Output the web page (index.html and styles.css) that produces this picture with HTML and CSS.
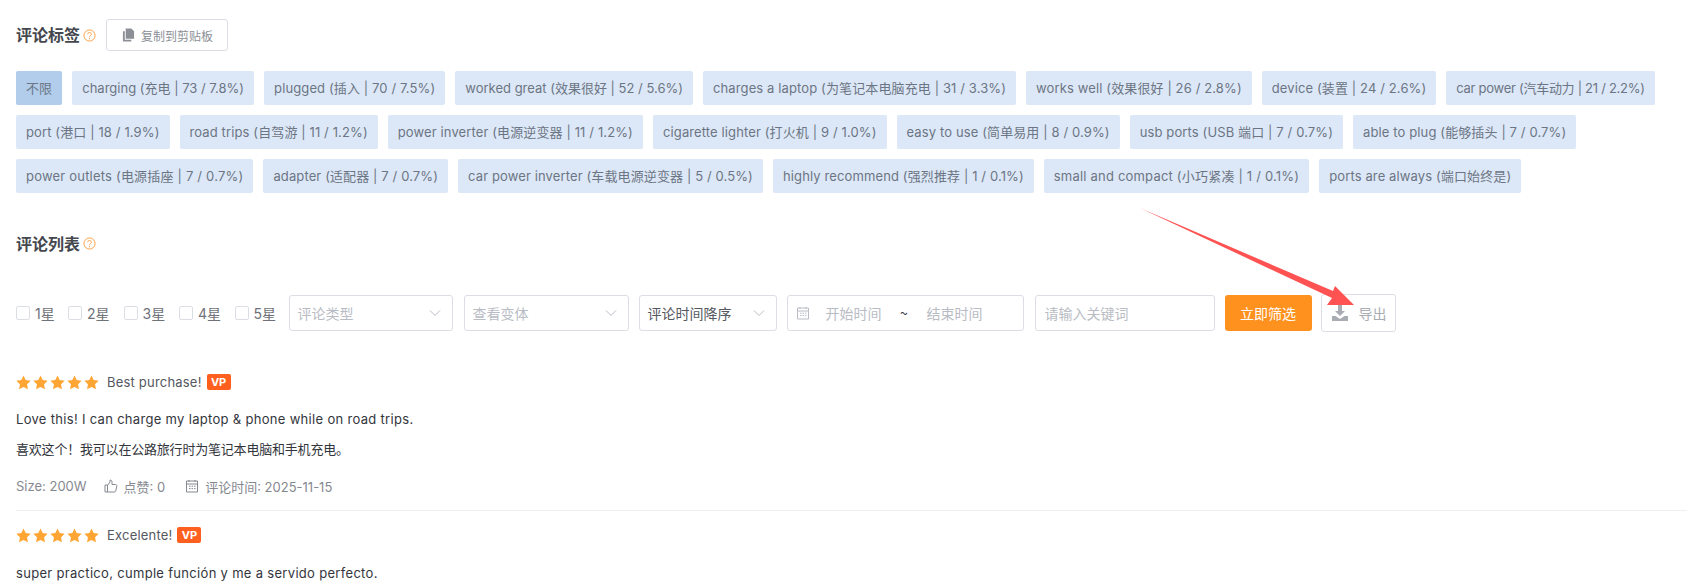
FILE: index.html
```html
<!DOCTYPE html>
<html lang="zh">
<head>
<meta charset="utf-8">
<title>评论</title>
<link rel="stylesheet" href="styles.css">
</head>
<body>
<svg class="defs" width="0" height="0">
  <symbol id="star" viewBox="0 0 24 24"><path d="M12 .8l3.500 7.300 8 1.100-5.800 5.600 1.400 8L12 19l-7.100 3.800 1.400-8L.5 9.200l8-1.100z"/></symbol>
  <symbol id="help" viewBox="0 0 14 14"><circle cx="7" cy="7" r="6" fill="none" stroke="currentColor"/><path d="M5.100 5.600a1.900 1.900 0 1 1 2.900 1.600c-.7.400-1 .8-1 1.500" fill="none" stroke="currentColor"/><circle cx="7" cy="10.400" r=".7" fill="currentColor"/></symbol>
  <symbol id="cal" viewBox="0 0 14 14"><path d="M1.500 2h11v11h-11zM1.500 5h11M4 1v2M10 1v2M4 7.200h1.500M6.500 7.200H8M9 7.200h1.500M4 9.600h1.500M6.500 9.600H8M9 9.600h1.500" fill="none" stroke="currentColor"/></symbol>
  <symbol id="chev" viewBox="0 0 12 8"><path d="M1 1.500l5 5 5-5" fill="none" stroke="currentColor"/></symbol>
</svg>
<main class="page">
  <div class="head head-tags">
    <h2 class="title">评论标签</h2>
    <svg class="help"><use href="#help"/></svg>
    <button class="copy">
      <svg class="copy-icon" viewBox="0 0 14 14"><path d="M4 0h6l3 3v8H4z" fill="#8c8f96"/><path d="M1 3h2v9h7v2H1z" fill="#8c8f96"/></svg>
      复制到剪贴板
    </button>
  </div>
  <div class="tags">
    <span class="tag tag-on">不限</span>
    <span class="tag tag-snug">charging (充电 | 73 / 7.8%)</span>
    <span class="tag">plugged (插入 | 70 / 7.5%)</span>
    <span class="tag tag-snug">worked great (效果很好 | 52 / 5.6%)</span>
    <span class="tag">charges a laptop (为笔记本电脑充电 | 31 / 3.3%)</span>
    <span class="tag">works well (效果很好 | 26 / 2.8%)</span>
    <span class="tag">device (装置 | 24 / 2.6%)</span>
    <span class="tag tag-tight">car power (汽车动力 | 21 / 2.2%)</span>
    <span class="tag">port (港口 | 18 / 1.9%)</span>
    <span class="tag">road trips (自驾游 | 11 / 1.2%)</span>
    <span class="tag">power inverter (电源逆变器 | 11 / 1.2%)</span>
    <span class="tag">cigarette lighter (打火机 | 9 / 1.0%)</span>
    <span class="tag">easy to use (简单易用 | 8 / 0.9%)</span>
    <span class="tag">usb ports (USB 端口 | 7 / 0.7%)</span>
    <span class="tag">able to plug (能够插头 | 7 / 0.7%)</span>
    <span class="tag tag-wide">power outlets (电源插座 | 7 / 0.7%)</span>
    <span class="tag">adapter (适配器 | 7 / 0.7%)</span>
    <span class="tag">car power inverter (车载电源逆变器 | 5 / 0.5%)</span>
    <span class="tag">highly recommend (强烈推荐 | 1 / 0.1%)</span>
    <span class="tag tag-wide">small and compact (小巧紧凑 | 1 / 0.1%)</span>
    <span class="tag">ports are always (端口始终是)</span>
  </div>
  <div class="head head-list">
    <h2 class="title">评论列表</h2>
    <svg class="help"><use href="#help"/></svg>
  </div>
  <div class="filters">
    <label class="check check-first"><i class="box"></i>1星</label>
    <label class="check"><i class="box"></i>2星</label>
    <label class="check"><i class="box"></i>3星</label>
    <label class="check"><i class="box"></i>4星</label>
    <label class="check check-last"><i class="box"></i>5星</label>
    <div class="field select w-type"><span class="ph">评论类型</span><svg class="chev"><use href="#chev"/></svg></div>
    <div class="field select w-var"><span class="ph">查看变体</span><svg class="chev"><use href="#chev"/></svg></div>
    <div class="field select w-sort"><span>评论时间降序</span><svg class="chev"><use href="#chev"/></svg></div>
    <div class="field w-date">
      <svg class="date-icon"><use href="#cal"/></svg>
      <span class="ph">开始时间</span><span class="tilde">~</span><span class="ph">结束时间</span>
    </div>
    <div class="field w-key"><span class="ph">请输入关键词</span></div>
    <button class="go">立即筛选</button>
    <button class="export">
      <svg class="export-icon" viewBox="0 0 16 16"><path d="M6 0h4v6h3l-5 5-5-5h3z" fill="#a9acb3"/><path d="M0 11h3.500L8 14l4.500-3H16v5H0z" fill="#a9acb3"/></svg>
      导出
    </button>
  </div>
  <article class="review">
    <div class="r-head">
      <span class="stars"><svg><use href="#star"/></svg><svg><use href="#star"/></svg><svg><use href="#star"/></svg><svg><use href="#star"/></svg><svg><use href="#star"/></svg></span>
      <span class="r-title">Best purchase!</span><span class="vp">VP</span>
    </div>
    <p class="r-text">Love this! I can charge my laptop &amp; phone while on road trips.</p>
    <p class="r-text r-cn">喜欢这个！我可以在公路旅行时为笔记本电脑和手机充电。</p>
    <div class="meta">
      <span>Size: 200W</span>
      <span class="meta-item"><svg class="meta-icon" viewBox="0 0 14 14"><path d="M1 6h2.500v7H1zM3.500 6.500L6 3V1c1.500 0 2 1 2 2v2.500h3.500c1 0 1.500.8 1.300 1.700l-1 4.500c-.2.800-.7 1.300-1.500 1.300H3.500" fill="none" stroke="currentColor"/></svg>点赞: 0</span>
      <span class="meta-item"><svg class="meta-icon"><use href="#cal"/></svg>评论时间: 2025-11-15</span>
    </div>
  </article>
  <article class="review review-next">
    <div class="r-head">
      <span class="stars"><svg><use href="#star"/></svg><svg><use href="#star"/></svg><svg><use href="#star"/></svg><svg><use href="#star"/></svg><svg><use href="#star"/></svg></span>
      <span class="r-title">Excelente!</span><span class="vp">VP</span>
    </div>
    <p class="r-text r-next">super practico, cumple función y me a servido perfecto.</p>
  </article>
</main>
<svg class="arrow" viewBox="0 0 1687 582" width="1687" height="582"><path d="M1140 208L1333 291 1335 286 1354 305 1327 305 1332 298z" fill="#ff5353"/></svg>
</body>
</html>
```

FILE: styles.css
```css
* { box-sizing: border-box; }
html, body { margin: 0; padding: 0; background: #fff; }
body {
  height: 582px;
  overflow: hidden;
  font-family: "Inter", "Noto Sans CJK SC", sans-serif;
  font-size: 13px;
  color: #33363c;
  position: relative;
}
.defs { position: absolute; }
.page { padding: 19px 0 0 16px; }
.head { display: flex; align-items: center; }
.head-tags { height: 32px; }
.head-list { height: 24px; margin-top: 38px; }
.title {
  margin: 0;
  font-size: 16px;
  line-height: 24px;
  font-weight: 700;
  color: #44474e;
  font-family: "Noto Sans CJK SC", sans-serif;
}
.head-tags .title { padding-bottom: 3px; }
.help { width: 13px; height: 13px; margin-left: 3px; color: #ff9a3c; }
.copy {
  display: flex;
  align-items: center;
  width: 122px;
  height: 32px;
  margin-left: 10px;
  padding: 0 0 0 15px;
  background: #fff;
  border: 1px solid #dcdee6;
  border-radius: 3px;
  font: 12px "Noto Sans CJK SC", sans-serif;
  color: #8c8f96;
}
.copy-icon { width: 13px; height: 14px; margin-right: 6px; }
.tags { display: flex; flex-wrap: wrap; gap: 10px; margin-top: 20px; width: 1660px; }
.tag {
  height: 34px;
  line-height: 34px;
  padding: 0 10px;
  background: #dce8f7;
  border-radius: 2px;
  color: #6c7584;
  white-space: nowrap;
  letter-spacing: .12px;
}
.tag-on { background: #b1cdeb; }
.tag-snug { letter-spacing: 0; }
.tag-tight { letter-spacing: -.28px; }
.tag-wide { letter-spacing: .2px; }
.filters { display: flex; align-items: center; height: 38px; margin-top: 39px; }
.check { display: flex; align-items: center; width: 55.500px; color: #6f7279; font-size: 14px; }
.check-first { width: 52px; }
.check-last { width: 43px; }
.box {
  width: 14px;
  height: 14px;
  margin-right: 5px;
  background: #fff;
  border: 1px solid #dcdee6;
  border-radius: 2px;
}
.field {
  display: flex;
  align-items: center;
  height: 36px;
  padding: 0 8px;
  border: 1px solid #dcdee6;
  border-radius: 3px;
  font-family: "Noto Sans CJK SC", sans-serif;
  font-size: 14px;
  color: #55585f;
}
.select { justify-content: space-between; padding-right: 11px; }
.ph { color: #b9bcc4; }
.chev { width: 12px; height: 8px; color: #b9bcc4; }
.w-type { width: 164px; margin-left: 11px; }
.w-var { width: 165px; margin-left: 11px; }
.w-sort { width: 138px; margin-left: 10px; }
.w-date { width: 237px; margin-left: 10px; }
.w-key { width: 180px; margin-left: 11px; padding: 0 9px; }
.date-icon { width: 14px; height: 14px; color: #b9bcc4; margin-right: 16px; }
.tilde { width: 45px; text-align: center; color: #33363c; }
.go {
  width: 87px;
  height: 36px;
  margin-left: 10px;
  background: #ff911f;
  border: 0;
  border-radius: 3px;
  color: #fff;
  font: 14px "Noto Sans CJK SC", sans-serif;
}
.export {
  display: flex;
  align-items: center;
  width: 75px;
  height: 38px;
  margin-left: 9px;
  padding: 0 0 0 10px;
  background: #fff;
  border: 1px solid #dcdee6;
  border-radius: 3px;
  color: #a9acb3;
  font: 14px "Noto Sans CJK SC", sans-serif;
}
.export-icon { width: 16px; height: 16px; margin-right: 11px; }
.review { margin-top: 42px; padding-bottom: 14px; border-bottom: 1px solid #eeeff2; }
.review-next { margin-top: 16px; border-bottom: 0; }
.r-head { display: flex; align-items: center; height: 16px; }
.stars { display: flex; gap: 2px; fill: #ffa534; }
.stars svg { width: 15px; height: 15px; }
.r-title { margin-left: 8px; color: #55585f; letter-spacing: .2px; }
.vp {
  margin-left: 5px;
  width: 24px;
  height: 16px;
  line-height: 16px;
  text-align: center;
  background: #ff5f1f;
  border-radius: 2px;
  color: #fff;
  font-size: 11px;
  font-weight: 700;
}
.r-text { margin: 19px 0 0; line-height: 20px; color: #33363c; letter-spacing: .31px; }
.r-cn { margin-top: 10px; letter-spacing: -.2px; }
.r-next { margin-top: 20px; }
.meta { display: flex; align-items: center; height: 20px; margin-top: 17px; color: #85888f; }
.meta-item { display: flex; align-items: center; margin-left: 17px; }
.meta-item + .meta-item { margin-left: 20px; }
.meta-icon { width: 14px; height: 14px; margin-right: 6px; }
.arrow { position: absolute; left: 0; top: 0; pointer-events: none; }
```
